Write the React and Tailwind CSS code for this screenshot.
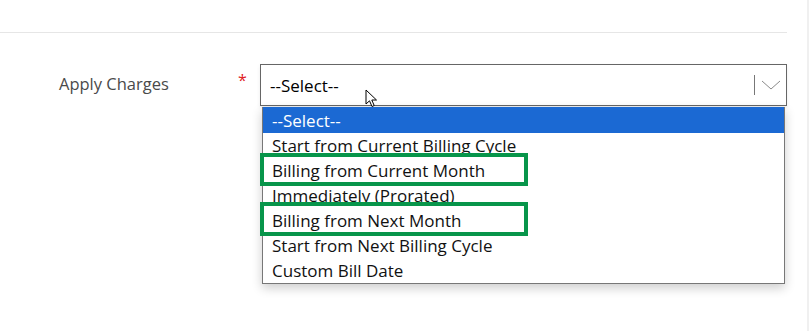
const options = [
  "--Select--",
  "Start from Current Billing Cycle",
  "Billing from Current Month",
  "Immediately (Prorated)",
  "Billing from Next Month",
  "Start from Next Billing Cycle",
  "Custom Bill Date",
];

function Cursor() {
  return (
    <svg width="14" height="20" viewBox="0 0 14 20" className="absolute left-[365px] top-[89px]">
      <path
        d="M1 1 L1 15 L4.5 11.8 L7 17.5 L9.2 16.5 L6.8 11 L11.5 11 Z"
        fill="#fff"
        stroke="#000"
        strokeWidth="1"
      />
    </svg>
  );
}

function Chevron() {
  return (
    <svg width="20" height="10" viewBox="0 0 20 10" className="ml-[6px] mr-[5px]">
      <polyline points="1,1 10,9 19,1" fill="none" stroke="#8a8a8a" strokeWidth="1" />
    </svg>
  );
}

export default function App() {
  return (
    <div
      className="relative h-[331px] w-[809px] overflow-hidden bg-white"
      style={{ fontFamily: '"Open Sans", "Noto Sans", sans-serif' }}
    >
      <div className="h-[32px]" />
      <div className="h-px w-[787px] bg-[#e6e6e6]" />

      <div className="mt-[31px] flex items-start">
        <div className="flex h-[42px] w-[238px] items-center pl-[59px] pb-[2px] text-[16.5px] text-[#4a4a4a]">
          Apply Charges
        </div>
        <div className="w-[22px] pt-[8px] text-[16px] leading-none text-[#e0201c]">*</div>
        <div className="flex h-[42px] w-[527px] items-center border border-[#666] bg-white shadow-[0_2px_4px_rgba(0,0,0,0.08)]">
          <span className="flex-1 pl-[9px] pt-[2px] text-[17px] text-black">--Select--</span>
          <div className="h-[20px] w-px bg-[#777]" />
          <Chevron />
        </div>
      </div>

      {/* open option list */}
      <ul className="absolute left-[262px] top-[107px] w-[523px] border-x border-b border-[#777] bg-white shadow-[0_4px_10px_rgba(0,0,0,0.2)]">
        {options.map((opt, i) => (
          <li
            key={opt}
            className={
              i === 0
                ? "flex h-[26px] items-center bg-[#1b69d3] pl-[9px] text-[17px] leading-none text-white"
                : "flex h-[25px] items-center pl-[9px] text-[17px] leading-none text-[#111]"
            }
          >
            {opt}
          </li>
        ))}
      </ul>

      {/* highlight annotations */}
      <div className="absolute left-[260px] top-[153px] h-[33px] w-[268px] border-[4px] border-[#07954a]" />
      <div className="absolute left-[260px] top-[202px] h-[34px] w-[268px] border-[4px] border-[#07954a]" />

      <Cursor />

      <div className="absolute right-0 top-0 h-full w-[2px] bg-[#f0f0f0]" />
    </div>
  );
}
